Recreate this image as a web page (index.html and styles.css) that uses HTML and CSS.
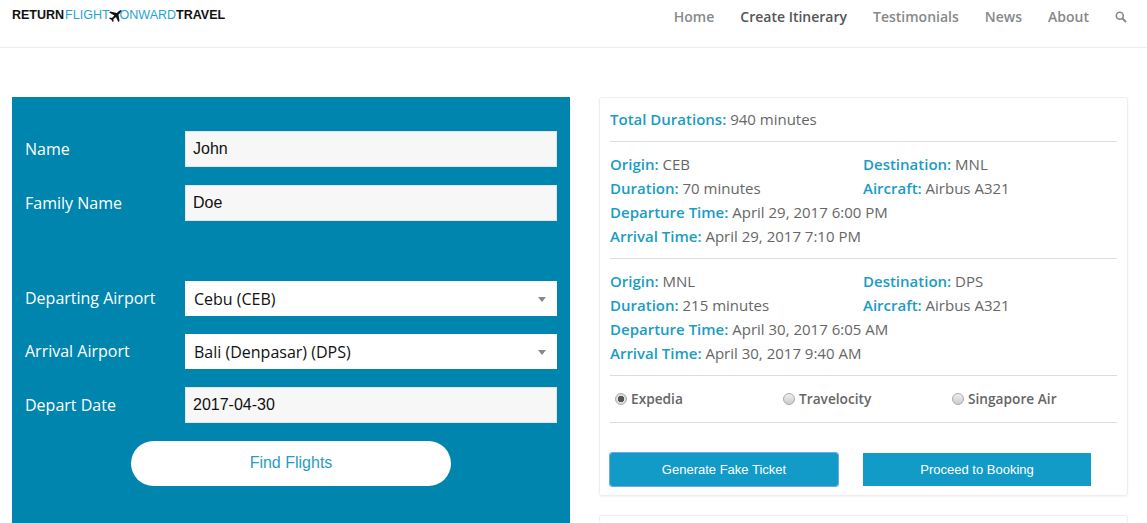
FILE: index.html
```html
<!DOCTYPE html>
<html lang="en">
<head>
<meta charset="UTF-8" />
<meta name="viewport" content="width=device-width, initial-scale=1" />
<title>Create Itinerary</title>
<link rel="stylesheet" href="styles.css">
</head>
<body>

<header class="topbar">
  <a class="logo" href="#">
    <span class="logo-dark">RETURN</span><span class="logo-blue">FLIGHT</span>
    <svg class="logo-plane" viewBox="0 0 14 12" width="14" height="12"><path d="M13.6.5c-.6-.5-1.800-.3-2.500.4L8.800 3.100 2.300 1.400 1.200 2.400l5.200 3-2.400 2.500-2-.3-.9.8 2.300 1.300L4.700 12l.9-.8-.2-2.100 2.600-2.200 2.300 5 1.200-1-1-6.400 2.700-2.500c.6-.6.800-1.100.4-1.500z"/></svg>
    <span class="logo-blue">ONWARD</span><span class="logo-dark">TRAVEL</span>
  </a>
  <nav class="nav">
    <a href="#">Home</a>
    <a href="#" class="active">Create Itinerary</a>
    <a href="#">Testimonials</a>
    <a href="#">News</a>
    <a href="#">About</a>
    <a href="#" class="nav-search">
      <svg viewBox="0 0 12 12" width="12" height="12"><circle cx="4.800" cy="4.800" r="3.500" fill="none" stroke="#888" stroke-width="1.600"/><path d="M7.500 7.500l3.500 3.500" stroke="#888" stroke-width="2"/></svg>
    </a>
  </nav>
</header>

<main class="content">
  <form class="flight-form">
    <div class="field">
      <label for="firstName">Name</label>
      <input id="firstName" type="text" value="John">
    </div>
    <div class="field">
      <label for="familyName">Family Name</label>
      <input id="familyName" type="text" value="Doe">
    </div>
    <div class="field field-select field-spaced">
      <label for="departing">Departing Airport</label>
      <div class="select-wrap">
        <select id="departing"><option>Cebu (CEB)</option></select>
      </div>
    </div>
    <div class="field field-select">
      <label for="arrival">Arrival Airport</label>
      <div class="select-wrap">
        <select id="arrival"><option>Bali (Denpasar) (DPS)</option></select>
      </div>
    </div>
    <div class="field">
      <label for="departDate">Depart Date</label>
      <input id="departDate" type="text" value="2017-04-30">
    </div>
    <button type="button" class="find-btn">Find Flights</button>
  </form>

  <div class="side">
    <section class="card">
      <p class="line total"><b>Total Durations:</b> 940 minutes</p>
      <hr>
      <div class="leg">
        <p class="line"><b>Origin:</b> CEB</p>
        <p class="line"><b>Destination:</b> MNL</p>
        <p class="line"><b>Duration:</b> 70 minutes</p>
        <p class="line"><b>Aircraft:</b> Airbus A321</p>
        <p class="line wide"><b>Departure Time:</b> April 29, 2017 6:00 PM</p>
        <p class="line wide"><b>Arrival Time:</b> April 29, 2017 7:10 PM</p>
      </div>
      <hr>
      <div class="leg">
        <p class="line"><b>Origin:</b> MNL</p>
        <p class="line"><b>Destination:</b> DPS</p>
        <p class="line"><b>Duration:</b> 215 minutes</p>
        <p class="line"><b>Aircraft:</b> Airbus A321</p>
        <p class="line wide"><b>Departure Time:</b> April 30, 2017 6:05 AM</p>
        <p class="line wide"><b>Arrival Time:</b> April 30, 2017 9:40 AM</p>
      </div>
      <hr>
      <div class="providers">
        <label><input type="radio" name="provider" checked> Expedia</label>
        <label><input type="radio" name="provider"> Travelocity</label>
        <label><input type="radio" name="provider"> Singapore Air</label>
      </div>
      <hr>
      <div class="actions">
        <button type="button" class="action-btn focused">Generate Fake Ticket</button>
        <button type="button" class="action-btn">Proceed to Booking</button>
      </div>
    </section>
    <section class="card card-next"></section>
  </div>
</main>

</body>
</html>
```

FILE: styles.css
```css
html, body {
  height: 523px;
  overflow: hidden;
}
body {
  margin: 0;
  background: #fff;
  color: #666;
  font-family: "Open Sans", sans-serif;
  font-size: 15px;
}
.topbar {
  display: flex;
  justify-content: space-between;
  height: 47px;
  padding: 0 20px 0 12px;
  border-bottom: 1px solid #eee;
}
.logo {
  display: flex;
  align-items: center;
  height: 31px;
  font-family: "Liberation Sans", Arial, sans-serif;
  font-size: 12.500px;
  line-height: 31px;
  text-decoration: none;
}
.logo-dark {
  color: #111;
  font-weight: bold;
}
.logo-blue {
  color: #29a3d6;
  margin-left: 1px;
}
.logo-plane {
  fill: #111;
  margin: 0 -3px 0 -2px;
}
.nav {
  display: flex;
  gap: 26px;
  height: 33px;
  align-items: center;
}
.nav a {
  color: #888;
  font-size: 14px;
  font-weight: 600;
  text-decoration: none;
}
.nav a.active {
  color: #555;
}
.nav-search {
  display: flex;
}
.content {
  display: flex;
  align-items: flex-start;
  gap: 29px;
  padding: 49px 19px 0 12px;
}
.flight-form {
  width: 558px;
  height: 426px;
  flex: none;
  box-sizing: border-box;
  padding: 34px 13px 0;
  background: #0085ae;
}
.field {
  display: flex;
  align-items: center;
  margin-bottom: 18px;
}
.field-spaced {
  margin-top: 60px;
}
.field label {
  width: 160px;
  flex: none;
  color: #fff;
  font-size: 16px;
}
.field-select label {
  padding-bottom: 2px;
}
.field input,
.field select {
  display: block;
  width: 372px;
  height: 36px;
  box-sizing: border-box;
  padding: 0 7px;
  border: 1px solid #e4e4e4;
  border-radius: 0;
  background: #f7f7f7;
  color: #111;
  font-family: "Liberation Sans", Arial, sans-serif;
  font-size: 16px;
  outline: none;
}
.select-wrap {
  position: relative;
}
.select-wrap::after {
  content: "";
  position: absolute;
  top: 16px;
  right: 11px;
  border-top: 5px solid #888;
  border-left: 4px solid transparent;
  border-right: 4px solid transparent;
}
.field select {
  height: 35px;
  padding: 0 9px;
  border: none;
  background: #fff;
  font-family: "Open Sans", sans-serif;
  -webkit-appearance: none;
  appearance: none;
}
.find-btn {
  display: block;
  width: 320px;
  height: 45px;
  margin: 0 auto;
  padding: 0 0 2px;
  border: none;
  border-radius: 23px;
  background: #fff;
  color: #2a9cc4;
  font-family: "Liberation Sans", Arial, sans-serif;
  font-size: 16px;
}
.side {
  flex: 1;
  display: flex;
  flex-direction: column;
  gap: 19px;
}
.card {
  box-sizing: border-box;
  height: 399px;
  padding: 9px 10px 0;
  border: 1px solid #eee;
  border-radius: 3px;
  box-shadow: 0 1px 2px rgba(0, 0, 0, 0.05);
}
.card-next {
  height: 8px;
  padding: 0;
  border-bottom: none;
  box-shadow: none;
}
.card hr {
  margin: 9px 0 10px;
  border: none;
  border-top: 1px solid #ddd;
}
.line {
  margin: 0;
  line-height: 24px;
}
.line b {
  color: #1a9cc4;
  font-weight: 600;
}
.total {
  padding-bottom: 1px;
}
.leg {
  display: grid;
  grid-template-columns: 253px 1fr;
  padding-bottom: 1px;
}
.providers {
  display: grid;
  grid-template-columns: 168px 169px 1fr;
  padding: 1px 0 2px 5px;
  font-size: 13.700px;
  font-weight: 600;
  line-height: 24px;
}
.wide {
  grid-column: 1 / 3;
}
.providers label {
  display: flex;
  align-items: center;
  gap: 4px;
}
.providers input {
  -webkit-appearance: none;
  appearance: none;
  width: 12px;
  height: 12px;
  margin: 0;
  border: 1px solid #aaa;
  border-radius: 50%;
  background: linear-gradient(#eee, #ccc);
}
.providers input:checked {
  background: radial-gradient(circle, #555 0 3px, #ddd 3.500px);
}
.actions {
  display: flex;
  gap: 25px;
  padding-top: 20px;
}
.action-btn {
  width: 228px;
  height: 33px;
  box-sizing: border-box;
  border: none;
  background: #119bc6;
  color: #fff;
  font-family: "Liberation Sans", Arial, sans-serif;
  font-size: 13px;
}
.action-btn.focused {
  outline: 1px solid #6fa8ee;
  border-radius: 2px;
}
```
